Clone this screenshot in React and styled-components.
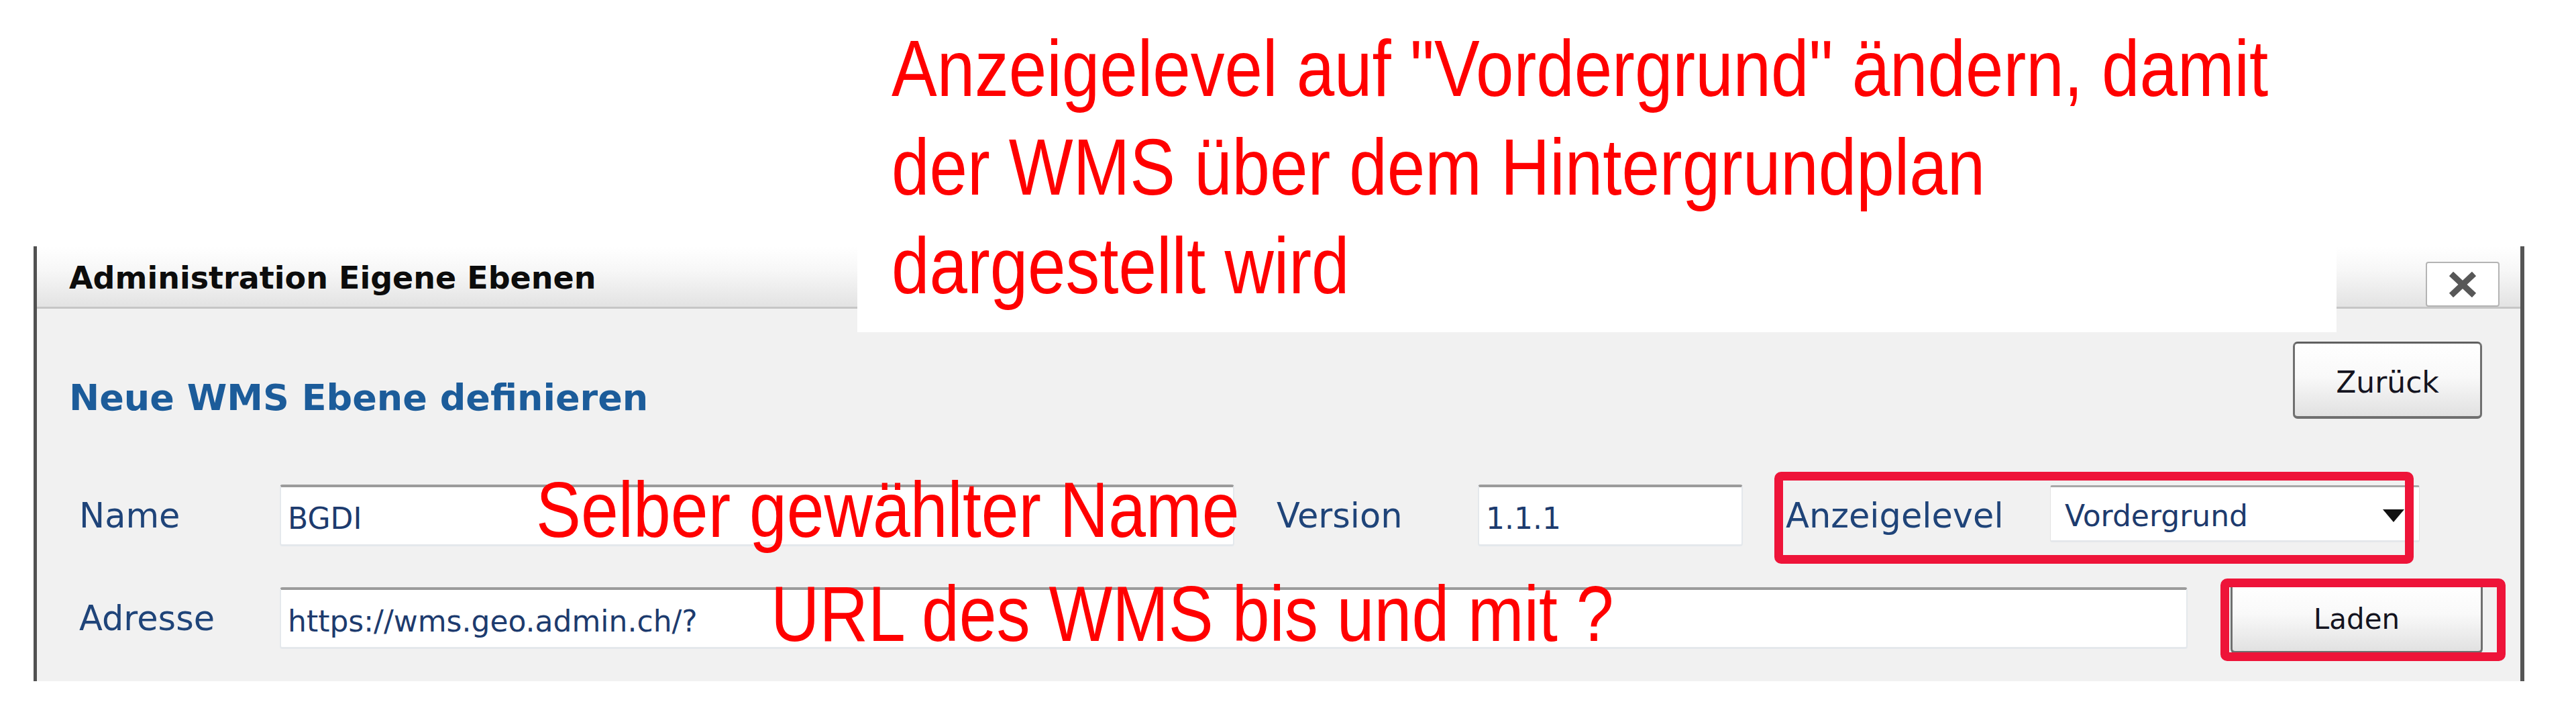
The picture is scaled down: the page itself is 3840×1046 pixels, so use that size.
import styled, { createGlobalStyle } from "styled-components";

const GlobalStyle = createGlobalStyle`
  html, body {
    margin: 0;
    padding: 0;
    background: #ffffff;
  }
  * {
    box-sizing: border-box;
  }
`;

const App = () => {
  return (
    <>
      <GlobalStyle />
      <Stage>
        <Dialog>
          <Header>
            <HeaderTitle>Administration Eigene Ebenen</HeaderTitle>
            <CloseButton aria-label="Schliessen">
              <svg width="42" height="38" viewBox="0 0 42 38">
                <path d="M4 3 L38 35 M38 3 L4 35" stroke="#575757" strokeWidth="9" fill="none" />
              </svg>
            </CloseButton>
          </Header>
          <Body>
            <TopRow>
              <SectionTitle>Neue WMS Ebene definieren</SectionTitle>
              <Button $w={282} $h={115}>Zurück</Button>
            </TopRow>
            <FormRow $mt={98}>
              <Label $w={299}>Name</Label>
              <TextInput $w={1423} defaultValue="BGDI" readOnly />
              <Label $w={300} $ml={63}>Version</Label>
              <TextInput $w={395} defaultValue="1.1.1" readOnly />
              <Marked $ml={64} $inset="-19px 9px -26px -17px">
                <Label $w={394}>Anzeigelevel</Label>
                <Select $w={551}>
                  <span>Vordergrund</span>
                  <Arrow />
                </Select>
              </Marked>
            </FormRow>
            <FormRow $mt={61} $align="flex-start">
              <Label $w={299} $h={92}>Adresse</Label>
              <TextInput $w={2844} defaultValue="https://wms.geo.admin.ch/?" readOnly />
              <Marked $ml={64} $inset="-13px -34px -18px -15px">
                <Button $w={376} $h={107} $mt={-2} $size={42}>Laden</Button>
              </Marked>
            </FormRow>
          </Body>
        </Dialog>

        <Callout>
          <CalloutText>
            <Line>Anzeigelevel auf "Vordergrund" ändern, damit</Line>
            <Line>der WMS über dem Hintergrundplan</Line>
            <Line>dargestellt wird</Line>
          </CalloutText>
        </Callout>
        <Note $x={799} $y={702}>Selber gewählter Name</Note>
        <Note $x={1149} $y={857}>URL des WMS bis und mit ?</Note>
      </Stage>
    </>
  );
};

export default App;

const Stage = styled.div`
  position: relative;
  width: 3840px;
  height: 1046px;
  overflow: hidden;
  background: #ffffff;
  padding-top: 367px;
  padding-left: 50px;
`;

const Dialog = styled.div`
  width: 3713px;
  border-left: 5px solid #515151;
  border-right: 6px solid #555555;
  display: flex;
  flex-direction: column;
`;

const Header = styled.div`
  height: 93px;
  display: flex;
  justify-content: space-between;
  padding: 0 31px 0 48px;
  background: linear-gradient(#ffffff 0%, #f7f7f7 40%, #e3e3e3 100%);
  border-bottom: 3px solid #c6c6c6;
`;

const HeaderTitle = styled.div`
  align-self: center;
  font-family: "DejaVu Sans", Verdana, sans-serif;
  font-weight: bold;
  font-size: 46px;
  color: #0c0c0c;
  margin-top: 4px;
`;

const CloseButton = styled.button`
  align-self: flex-end;
  width: 110px;
  height: 67px;
  padding: 0;
  display: flex;
  align-items: center;
  justify-content: center;
  background: #ffffff;
  border: 2px solid #b4b4b4;
  border-radius: 4px;
`;

const Body = styled.div`
  background: #f1f1f1;
  padding: 49px 57px 48px 0;
  display: flex;
  flex-direction: column;
`;

const TopRow = styled.div`
  display: flex;
  justify-content: space-between;
  align-items: flex-start;
  padding-left: 48px;
`;

const SectionTitle = styled.h2`
  margin: 53px 0 0;
  font-family: "DejaVu Sans", Verdana, sans-serif;
  font-weight: bold;
  font-size: 54px;
  line-height: 62px;
  color: #1c5c9a;
`;

const Button = styled.button`
  width: ${(p) => p.$w}px;
  height: ${(p) => p.$h}px;
  margin-top: ${(p) => p.$mt || 0}px;
  font-family: "DejaVu Sans", Verdana, sans-serif;
  font-size: ${(p) => p.$size || 44}px;
  color: #141420;
  background: linear-gradient(#ffffff 0%, #f9f9f9 45%, #e1e1e1 100%);
  border: 3px solid #6f6f6f;
  border-top-color: #5f5f5f;
  border-bottom-width: 4px;
  border-radius: 7px;
  padding: 6px 0 0;
`;

const FormRow = styled.div`
  display: flex;
  align-items: ${(p) => p.$align || "center"};
  margin-top: ${(p) => p.$mt}px;
  padding-left: 63px;
  height: 92px;
`;

const Label = styled.div`
  flex: none;
  width: ${(p) => p.$w}px;
  height: ${(p) => (p.$h ? `${p.$h}px` : "auto")};
  margin-left: ${(p) => p.$ml || 0}px;
  display: flex;
  align-items: center;
  font-family: "DejaVu Sans", Verdana, sans-serif;
  font-size: 51px;
  color: #1f4479;
`;

const TextInput = styled.input`
  flex: none;
  width: ${(p) => p.$w}px;
  height: 92px;
  padding: 8px 10px 0;
  font-family: "DejaVu Sans", Verdana, sans-serif;
  font-size: 44px;
  color: #1d3b6e;
  background: #ffffff;
  border: 2px solid #e4e8ec;
  border-top: 4px solid #9b9b9b;
  border-bottom-width: 3px;
  border-radius: 4px;
  outline: none;
`;

const Marked = styled.div`
  position: relative;
  flex: none;
  display: flex;
  align-items: center;
  height: 92px;
  margin-left: ${(p) => p.$ml || 0}px;

  &::after {
    content: "";
    position: absolute;
    inset: ${(p) => p.$inset};
    border: 13px solid #ee1439;
    border-radius: 10px;
    pointer-events: none;
  }
`;

const Select = styled.div`
  flex: none;
  width: ${(p) => p.$w}px;
  height: 85px;
  margin-top: -6px;
  display: flex;
  align-items: center;
  justify-content: space-between;
  padding: 6px 22px 0 21px;
  font-family: "DejaVu Sans", Verdana, sans-serif;
  font-size: 44px;
  color: #1d3b6e;
  background: #ffffff;
  border: 1px solid #e2e2e2;
  border-top: 3px solid #a8a8a8;
  border-bottom: 3px solid #e4e7eb;
  border-radius: 3px;
`;

const Arrow = styled.span`
  width: 0;
  height: 0;
  border-left: 16px solid transparent;
  border-right: 16px solid transparent;
  border-top: 19px solid #111111;
`;

const Callout = styled.div`
  position: absolute;
  left: 1278px;
  top: 0;
  width: 2205px;
  height: 495px;
  background: #ffffff;
  padding: 29px 0 0 51px;
`;

const CalloutText = styled.div`
  transform: scaleX(0.86);
  transform-origin: left top;
  font-family: "Liberation Sans", Arial, sans-serif;
  font-size: 118px;
  line-height: 147px;
  color: #ff0000;
  white-space: nowrap;
`;

const Line = styled.div``;

const Note = styled.div`
  position: absolute;
  left: ${(p) => p.$x}px;
  top: ${(p) => p.$y}px;
  transform: scaleX(0.865);
  transform-origin: left top;
  font-family: "Liberation Sans", Arial, sans-serif;
  font-size: 116px;
  line-height: 116px;
  color: #ff0000;
  white-space: nowrap;
`;
